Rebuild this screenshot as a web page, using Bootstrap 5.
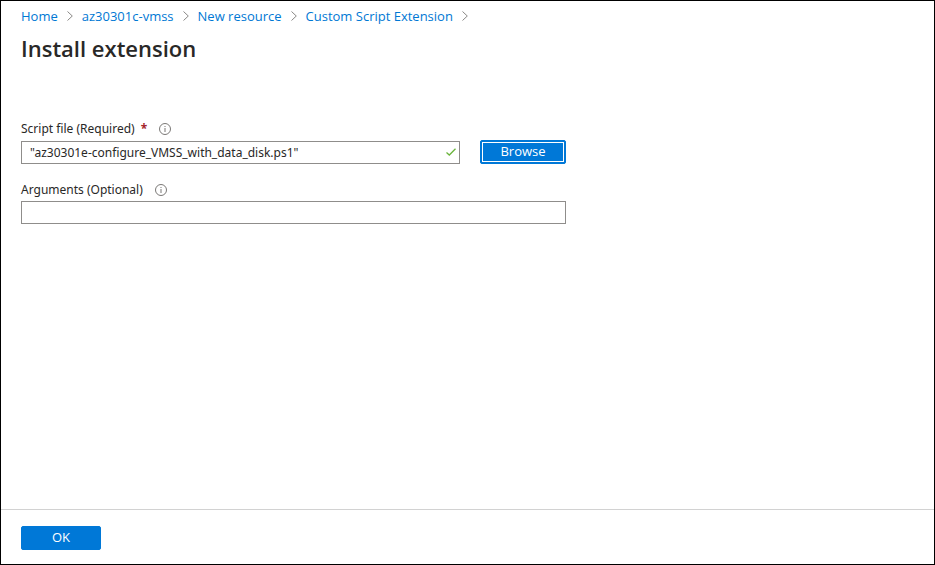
<!DOCTYPE html>
<html lang="en">
<head>
<meta charset="utf-8">
<meta name="viewport" content="width=device-width, initial-scale=1">
<title>Install extension</title>
<link href="https://cdn.jsdelivr.net/npm/bootstrap@5.3.0/dist/css/bootstrap.min.css" rel="stylesheet">
<style>
  body { font-family: "Segoe UI", "Open Sans", "Noto Sans", sans-serif; font-size: 13px; line-height: 18px; color: #292827; }
  .blade { border: 1px solid #000; }
  .blade-head { padding: 6px 20px 0; }
  .trail { --bs-breadcrumb-margin-bottom: 0; --bs-breadcrumb-font-size: 13px; gap: 9px; }
  .trail a { color: #0078d4; }
  .trail svg { color: #8a8886; }
  .blade-title { font-size: 22px; line-height: 32px; margin-top: 7px; }
  .blade-form { max-width: 585px; padding: 56px 20px 20px; }
  .field-label, .field-box { font-family: "Segoe UI", "Noto Sans", sans-serif; font-size: 12px; line-height: 18px; }
  .field-label { margin-bottom: 2px; gap: 12px; }
  .required-mark { color: #a4262c; margin-left: 3px; }
  .info-icon { color: #7a7876; }
  .field-box { height: 23px; min-height: 0; padding: 0 8px; color: #292827; border: 1px solid #8f8d8b; border-radius: 0; }
  .valid-check { right: 4px; color: #6bb53d; }
  .file-row { gap: 20px; margin-bottom: 17px; }
  .azure-btn { --bs-btn-bg: #0078d7; --bs-btn-border-color: #0078d7; --bs-btn-hover-bg: #106ebe; --bs-btn-font-size: 13px; --bs-btn-line-height: 18px; width: 80px; height: 24px; padding: 1px 8px 3px; border-radius: 2px; }
  .browse-btn { width: 86px; outline: 1px solid #fff; outline-offset: -3px; }
  .blade-foot { border-top: 1px solid #d2d2d2; padding: 16px 20px 14px; }
</style>
<script src="https://cdn.jsdelivr.net/npm/bootstrap@5.3.0/dist/js/bootstrap.bundle.min.js"></script>
</head>
<body>
<svg class="d-none" aria-hidden="true">
  <symbol id="chevron" viewBox="0 0 6 10"><path d="M.5.5 5.3 5 .5 9.500" fill="none" stroke="currentColor"/></symbol>
  <symbol id="info" viewBox="0 0 12 12"><circle cx="6" cy="6" r="5.500" fill="none" stroke="currentColor"/><path d="M5.500 5h1v4h-1zM5.500 3h1v1h-1z" fill="currentColor"/></symbol>
</svg>
<div class="blade d-flex flex-column min-vh-100">
  <header class="blade-head">
    <nav aria-label="Breadcrumb">
      <div class="breadcrumb trail align-items-center">
        <a class="text-decoration-none" href="#">Home</a>
        <svg width="6" height="10" aria-hidden="true"><use href="#chevron"/></svg>
        <a class="text-decoration-none" href="#">az30301c-vmss</a>
        <svg width="6" height="10" aria-hidden="true"><use href="#chevron"/></svg>
        <a class="text-decoration-none" href="#">New resource</a>
        <svg width="6" height="10" aria-hidden="true"><use href="#chevron"/></svg>
        <a class="text-decoration-none" href="#">Custom Script Extension</a>
        <svg width="6" height="10" aria-hidden="true"><use href="#chevron"/></svg>
      </div>
    </nav>
    <h1 class="blade-title fw-semibold mb-0">Install extension</h1>
  </header>
  <main class="flex-grow-1">
    <form class="blade-form" id="install-form">
      <div class="field-label d-flex align-items-center">
        <label for="script-file">Script file (Required) <span class="required-mark fw-bold">*</span></label>
        <svg class="info-icon" width="12" height="12" aria-hidden="true"><use href="#info"/></svg>
      </div>
      <div class="file-row d-flex align-items-center">
        <div class="position-relative flex-grow-1">
          <input class="form-control field-box" id="script-file" type="text" value="&quot;az30301e-configure_VMSS_with_data_disk.ps1&quot;">
          <svg class="valid-check position-absolute top-50 translate-middle-y" width="10" height="8" viewBox="0 0 10 8" aria-hidden="true"><path d="M.5 4.500 3.300 7 9.500.7" fill="none" stroke="currentColor" stroke-width="1.300"/></svg>
        </div>
        <button class="btn btn-primary azure-btn browse-btn" type="button">Browse</button>
      </div>
      <div class="field-label d-flex align-items-center">
        <label for="script-args">Arguments (Optional)</label>
        <svg class="info-icon" width="12" height="12" aria-hidden="true"><use href="#info"/></svg>
      </div>
      <input class="form-control field-box" id="script-args" type="text">
    </form>
  </main>
  <footer class="blade-foot">
    <button class="btn btn-primary azure-btn" type="submit" form="install-form">OK</button>
  </footer>
</div>
</body>
</html>
